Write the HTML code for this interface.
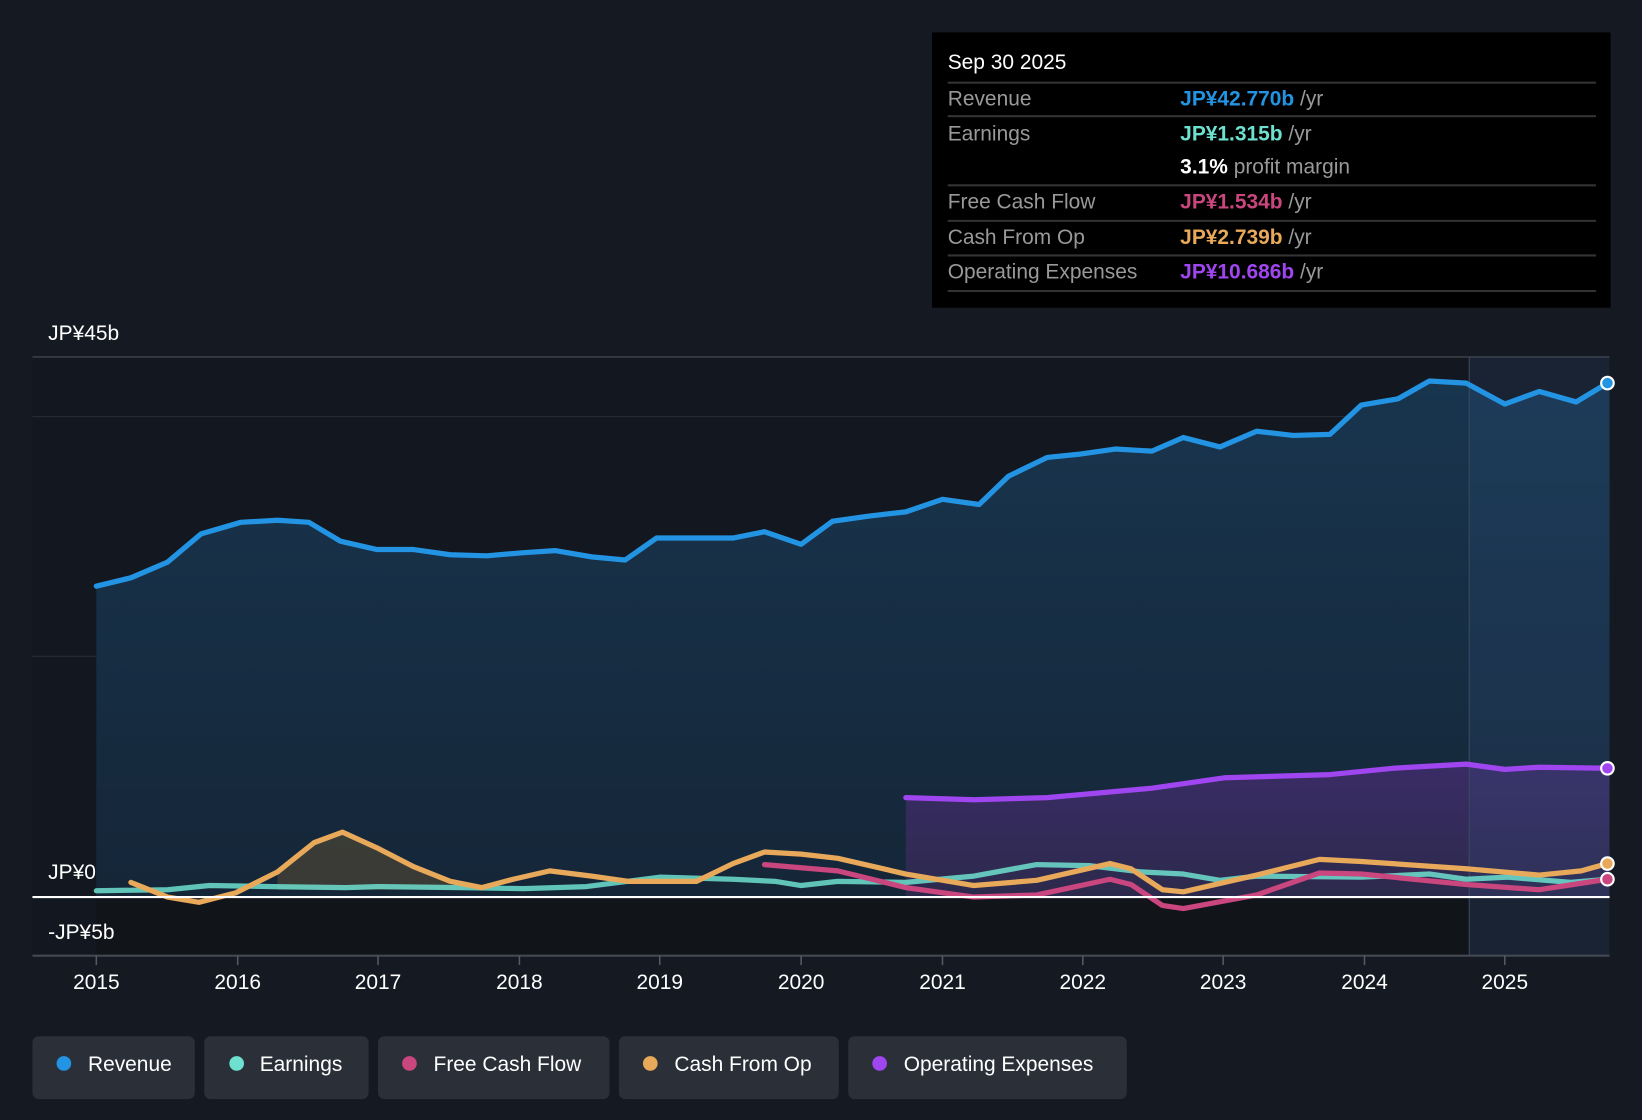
<!DOCTYPE html>
<html><head><meta charset="utf-8"><style>
html,body{margin:0;padding:0;background:#151a22;}
svg{display:block;font-family:"Liberation Sans",sans-serif;}
</style></head><body>
<svg width="1642" height="1120" viewBox="0 0 1568 1070" preserveAspectRatio="none" xmlns="http://www.w3.org/2000/svg">
<defs>
<linearGradient id="rg" x1="0" y1="0" x2="0" y2="1"><stop offset="0" stop-color="#18354e"/><stop offset="1" stop-color="#152638"/></linearGradient>
<linearGradient id="og" x1="0" y1="0" x2="0" y2="1"><stop offset="0" stop-color="#3a2c66"/><stop offset="1" stop-color="#2c2a4c"/></linearGradient>
</defs>
<rect width="1568" height="1070" fill="#151a22"/>
<rect x="31" y="341" width="1506" height="572" fill="#131820"/>
<rect x="92" y="857" width="1311" height="56" fill="#111419"/>
<line x1="31" y1="341" x2="1537" y2="341" stroke="#3a3e46" stroke-width="1.5"/>
<line x1="31" y1="398" x2="1537" y2="398" stroke="#2a2e36" stroke-width="1"/>
<line x1="31" y1="627" x2="1537" y2="627" stroke="#2a2e36" stroke-width="1"/>
<path d="M92,560 L125,552 L160,537 L192,510 L230,499 L265,497 L295,499 L325,517 L360,525 L395,525 L430,530 L465,531 L500,528 L530,526 L565,532 L597,535 L627,514 L665,514 L700,514 L730,508 L765,520 L795,498 L830,493 L865,489 L900,477 L935,482 L963,455 L1000,437 L1030,434 L1065,429 L1100,431 L1130,418 L1165,427 L1200,412 L1235,416 L1270,415 L1300,387 L1335,381 L1365,364 L1400,366 L1437,386 L1470,374 L1505,384 L1535,366 L1537,366 L1537,857 L92,857 Z" fill="url(#rg)"/>
<path d="M865,762 L930,764 L1000,762 L1100,753 L1170,743 L1270,740 L1330,734 L1400,730 L1437,735 L1470,733 L1535,734 L1537,734 L1537,857 L865,857 Z" fill="url(#og)"/>
<path d="M265,833 L300,805 L327,795 L360,810 L395,828 L430,842 L460,848 L430,850 L265,850 Z" fill="#4a4535" opacity="0.7"/>
<rect x="1403" y="341" width="134" height="572" fill="#3a5a8a" opacity="0.18"/>
<line x1="1403" y1="341" x2="1403" y2="913" stroke="#3a4a5e" stroke-width="1"/>
<g fill="none" stroke-linejoin="round" stroke-linecap="round" stroke-width="5">
<polyline stroke="#6ee0cf" opacity="0.85" points="92,851 160,850 200,846 260,847 330,848 360,847 440,848 500,849 560,847 630,838 700,840 740,842 765,846 800,842 865,843 930,837 990,826 1040,827 1090,833 1130,835 1165,841 1200,837 1300,838 1365,835 1400,840 1440,838 1500,843 1535,840"/>
<polyline stroke="#c9467e" points="730,826 800,832 865,848 930,857 990,855 1060,840 1080,845 1110,865 1130,868 1200,855 1260,834 1300,835 1400,845 1470,850 1535,840"/>
<polyline stroke="#e8a95a" points="125,843 160,857 190,862 225,853 265,833 300,805 327,795 360,810 395,828 430,842 460,848 490,840 525,832 565,837 600,842 665,842 700,825 730,814 765,816 800,820 865,835 930,846 990,841 1060,825 1080,830 1110,850 1130,852 1200,836 1260,821 1300,823 1400,830 1470,836 1510,832 1535,825"/>
<polyline stroke="#a046f0" points="865,762 930,764 1000,762 1100,753 1170,743 1270,740 1330,734 1400,730 1437,735 1470,733 1535,734"/>
<polyline stroke="#2394e3" points="92,560 125,552 160,537 192,510 230,499 265,497 295,499 325,517 360,525 395,525 430,530 465,531 500,528 530,526 565,532 597,535 627,514 665,514 700,514 730,508 765,520 795,498 830,493 865,489 900,477 935,482 963,455 1000,437 1030,434 1065,429 1100,431 1130,418 1165,427 1200,412 1235,416 1270,415 1300,387 1335,381 1365,364 1400,366 1437,386 1470,374 1505,384 1535,366"/>
</g>
<line x1="31" y1="857" x2="1537" y2="857" stroke="#ffffff" stroke-width="2"/>
<line x1="31" y1="913" x2="1537" y2="913" stroke="#444850" stroke-width="2"/>
<g stroke="#fff" stroke-width="2">
<circle cx="1535" cy="366" r="6" fill="#2394e3"/>
<circle cx="1535" cy="734" r="6" fill="#a046f0"/>
<circle cx="1535" cy="825" r="6" fill="#e8a95a"/>
<circle cx="1535" cy="840" r="6" fill="#c9467e"/>
</g>
<g fill="#fff" font-size="20">
<text x="46" y="325">JP¥45b</text>
<text x="46" y="840">JP¥0</text>
<text x="46" y="897">-JP¥5b</text>
</g>
<g stroke="#555a62" stroke-width="1.5">
<line x1="92" y1="913" x2="92" y2="922"/><line x1="227" y1="913" x2="227" y2="922"/><line x1="361" y1="913" x2="361" y2="922"/><line x1="496" y1="913" x2="496" y2="922"/><line x1="630" y1="913" x2="630" y2="922"/><line x1="765" y1="913" x2="765" y2="922"/><line x1="900" y1="913" x2="900" y2="922"/><line x1="1034" y1="913" x2="1034" y2="922"/><line x1="1168" y1="913" x2="1168" y2="922"/><line x1="1303" y1="913" x2="1303" y2="922"/><line x1="1437" y1="913" x2="1437" y2="922"/>
</g>
<g fill="#fff" font-size="20" text-anchor="middle">
<text x="92" y="945">2015</text><text x="227" y="945">2016</text><text x="361" y="945">2017</text><text x="496" y="945">2018</text><text x="630" y="945">2019</text><text x="765" y="945">2020</text><text x="900" y="945">2021</text><text x="1034" y="945">2022</text><text x="1168" y="945">2023</text><text x="1303" y="945">2024</text><text x="1437" y="945">2025</text>
</g>
<rect x="890" y="31" width="648" height="263" fill="#000"/>
<text x="905" y="66" fill="#fff" font-size="20">Sep 30 2025</text>
<g stroke="#333" stroke-width="2">
<line x1="905" y1="79" x2="1524" y2="79"/><line x1="905" y1="111" x2="1524" y2="111"/><line x1="905" y1="177" x2="1524" y2="177"/><line x1="905" y1="211" x2="1524" y2="211"/><line x1="905" y1="244" x2="1524" y2="244"/><line x1="905" y1="278" x2="1524" y2="278"/>
</g>
<g font-size="20" fill="#999">
<text x="905" y="101">Revenue</text>
<text x="905" y="134">Earnings</text>
<text x="905" y="199">Free Cash Flow</text>
<text x="905" y="233">Cash From Op</text>
<text x="905" y="266">Operating Expenses</text>
<text x="1127" y="101"><tspan fill="#2394e3" font-weight="bold">JP¥42.770b</tspan> /yr</text>
<text x="1127" y="134"><tspan fill="#6ee0cf" font-weight="bold">JP¥1.315b</tspan> /yr</text>
<text x="1127" y="166"><tspan fill="#fff" font-weight="bold">3.1%</tspan> profit margin</text>
<text x="1127" y="199"><tspan fill="#c9467e" font-weight="bold">JP¥1.534b</tspan> /yr</text>
<text x="1127" y="233"><tspan fill="#e8a95a" font-weight="bold">JP¥2.739b</tspan> /yr</text>
<text x="1127" y="266"><tspan fill="#a046f0" font-weight="bold">JP¥10.686b</tspan> /yr</text>
</g>
<g font-size="20" fill="#fff">
<rect x="31" y="990" width="155" height="60" rx="6" fill="#2b2f38"/><circle cx="61" cy="1016" r="7" fill="#2394e3"/><text x="84" y="1023">Revenue</text>
<rect x="195" y="990" width="157" height="60" rx="6" fill="#2b2f38"/><circle cx="226" cy="1016" r="7" fill="#6ee0cf"/><text x="248" y="1023">Earnings</text>
<rect x="361" y="990" width="221" height="60" rx="6" fill="#2b2f38"/><circle cx="391" cy="1016" r="7" fill="#c9467e"/><text x="414" y="1023">Free Cash Flow</text>
<rect x="591" y="990" width="210" height="60" rx="6" fill="#2b2f38"/><circle cx="621" cy="1016" r="7" fill="#e8a95a"/><text x="644" y="1023">Cash From Op</text>
<rect x="810" y="990" width="266" height="60" rx="6" fill="#2b2f38"/><circle cx="840" cy="1016" r="7" fill="#a046f0"/><text x="863" y="1023">Operating Expenses</text>
</g>
</svg>
</body></html>
